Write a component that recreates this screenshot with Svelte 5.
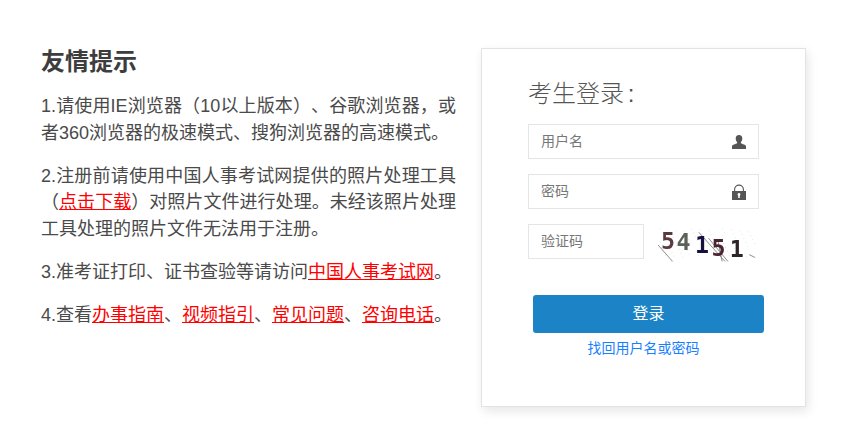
<script>
  // captcha digits, roughly where the generated image puts them
  const captcha = [
    { ch: '5', x: 3, y: 25, color: '#5a3a3e' },
    { ch: '4', x: 19, y: 26, color: '#5c6258' },
    { ch: '1', x: 38, y: 29, color: '#14103f' },
    { ch: '5', x: 55, y: 32, color: '#4a2430' },
    { ch: '1', x: 74, y: 33, color: '#2c2426' }
  ];

  // faint speckles behind the digits
  const dots = Array.from({ length: 70 }, (_, i) => ({
    x: (i * 37) % 98 + 2,
    y: (i * 23) % 30 + 4
  }));
</script>

<div class="page">
  <section class="tips">
    <h2>友情提示</h2>
    <p>1.请使用IE浏览器（10以上版本）、谷歌浏览器，或者360浏览器的极速模式、搜狗浏览器的高速模式。</p>
    <p>2.注册前请使用中国人事考试网提供的照片处理工具（<a href="#a">点击下载</a>）对照片文件进行处理。未经该照片处理工具处理的照片文件无法用于注册。</p>
    <p>3.准考证打印、证书查验等请访问<a href="#a">中国人事考试网</a>。</p>
    <p>4.查看<a href="#a">办事指南</a>、<a href="#a">视频指引</a>、<a href="#a">常见问题</a>、<a href="#a">咨询电话</a>。</p>
  </section>

  <section class="card">
    <h3>考生登录 :</h3>
    <div class="field">
      <span>用户名</span>
      <svg width="16" height="16" viewBox="0 0 16 16">
        <path d="M8 1c-2.200 0-3.300 1.400-3.300 3.400 0 1.500.6 2.800 1.400 3.600v1.300c-1.300.9-5.100 1.200-5.100 3.200V15h14v-2.500c0-2-3.800-2.300-5.100-3.200V8c.8-.8 1.400-2.100 1.400-3.600C11.300 2.400 10.200 1 8 1z" fill="#555" />
      </svg>
    </div>
    <div class="field">
      <span>密码</span>
      <svg width="16" height="16" viewBox="0 0 16 16">
        <path d="M3.600 7V5.500a4.400 4.400 0 0 1 8.800 0V7" fill="none" stroke="#555" stroke-width="1.100" />
        <path d="M1 7h14v9H1z M8 9a1.500 1.500 0 0 0-.8 2.700V14h1.600v-2.300A1.500 1.500 0 0 0 8 9z" fill="#555" fill-rule="evenodd" />
      </svg>
    </div>
    <div class="code-row">
      <div class="field code"><span>验证码</span></div>
      <svg class="captcha" width="104" height="38" viewBox="0 0 104 38">
        {#each dots as d}
          <rect x={d.x} y={d.y} width="1" height="1" fill="#e4e4e4" />
        {/each}
        <g stroke="#8a8a8a" stroke-width="1" fill="none">
          <path d="M0 21 L15 38" />
          <path d="M42 8 L69 38" />
          <path d="M52 14 L72 38" />
          <path d="M62 18 L66 38" />
          <path d="M94 31 L100 34" />
        </g>
        {#each captcha as c}
          <text x={c.x} y={c.y} font-size="24" fill={c.color} font-family="'DejaVu Sans Mono', monospace" font-weight="700">{c.ch}</text>
        {/each}
      </svg>
    </div>
    <button type="button"><span>登录</span></button>
    <a class="forgot" href="#a">找回用户名或密码</a>
  </section>
</div>

<style>
  :global(body) {
    background: #fff;
  }

  .page {
    display: flex;
    align-items: flex-start;
    width: 868px;
    height: 432px;
    box-sizing: border-box;
    padding: 48px 0 0 41px;
    font-family: "Liberation Sans", "Noto Sans CJK SC", sans-serif;
    color: #4a4a4a;
    text-spacing-trim: space-all;
  }

  .tips {
    width: 415px;
    margin-right: 25px;
    font-size: 18px;
    line-height: 26.6px;
    text-align: justify;
  }

  h2 {
    margin: 1px 0 18px;
    font-size: 24px;
    line-height: 26px;
    font-weight: 700;
    color: #3d3d3d;
  }

  p {
    margin: 0 0 16.500px;
  }

  a {
    color: #f00;
    text-decoration: underline;
  }

  .card {
    width: 325px;
    height: 359px;
    box-sizing: border-box;
    padding: 29px 46px 0;
    background: #fff;
    border: 1px solid #e3e3e3;
    box-shadow: 2px 4px 10px rgba(0, 0, 0, 0.1);
  }

  h3 {
    margin: 0 0 14px;
    font-size: 24px;
    line-height: 32px;
    font-weight: 300;
    color: #555;
    word-spacing: -3px;
  }

  .field {
    display: flex;
    align-items: center;
    justify-content: space-between;
    width: 231px;
    height: 35px;
    box-sizing: border-box;
    padding: 0 11px 0 12px;
    margin-bottom: 15px;
    border: 1px solid #e5e5e5;
    font-size: 14px;
    color: #777;
  }

  .field span {
    margin-bottom: 4px;
  }

  .code-row {
    display: flex;
    align-items: flex-start;
    gap: 14px;
  }

  .field.code {
    width: 116px;
    flex: none;
  }

  .captcha {
    filter: blur(0.4px);
  }

  button {
    display: block;
    width: 231px;
    height: 38px;
    margin: 21px 0 0 5px;
    padding: 0 0 5px;
    border: none;
    border-radius: 3px;
    background: #1c84c6;
    color: #fff;
    font: inherit;
    font-size: 16px;
  }

  .forgot {
    display: block;
    width: 231px;
    margin-top: 6px;
    text-align: center;
    font-size: 14px;
    line-height: 18px;
    color: #1a7fff;
    text-decoration: none;
  }
</style>
